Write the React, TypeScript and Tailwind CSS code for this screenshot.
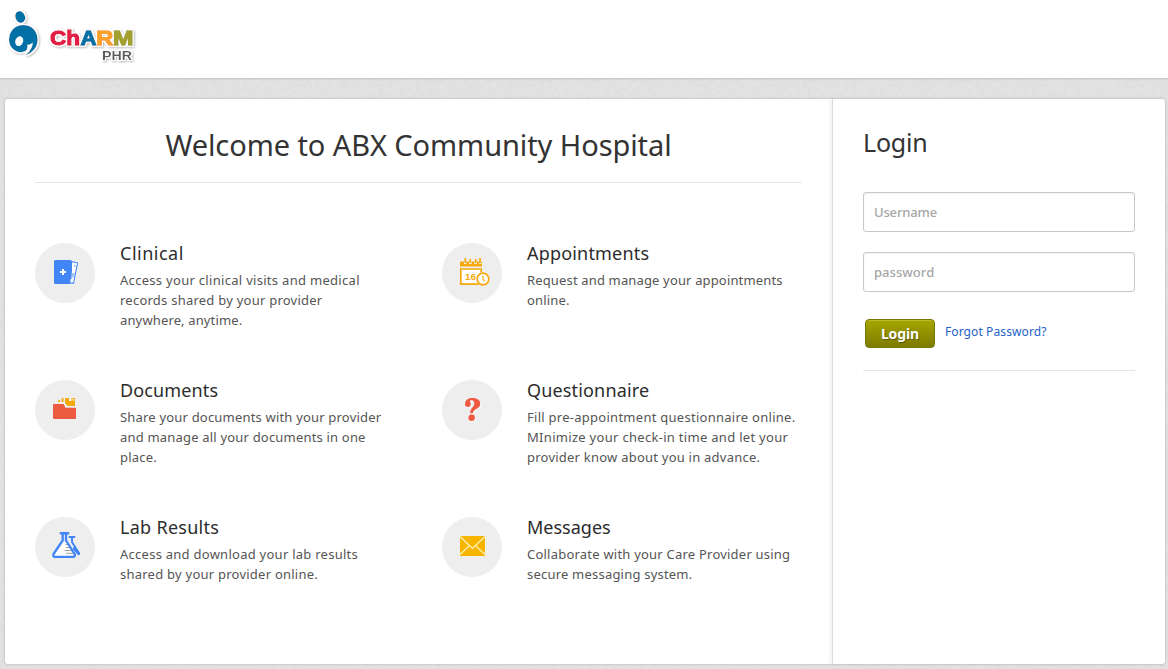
import type { ReactNode } from "react";

type Line = { text: string; tracking: string };
type Feature = { title: string; titleTracking: string; lines: Line[]; icon: ReactNode };

function ClinicalIcon() {
  return (
    <svg width="60" height="60" viewBox="0 0 60 60">
      <path d="M37 18 L43.3 19.3 L39 41 L31 40Z" fill="#fff" stroke="#fff" strokeWidth="1.5" />
      <path d="M37 18.6 L42.6 19.8 L38.6 40.4 L33 39.6" fill="#fff" stroke="#4285f4" strokeWidth="1.1" />
      <path d="M36 31h3.5M35.6 33h3.5M35 35h2.5M39 23h1.5" stroke="#4285f4" strokeWidth="1" />
      <path d="M20.5 17h15a1.5 1.5 0 0 1 1.5 1.5V28l-2 13H20.5a1.5 1.5 0 0 1-1.5-1.5v-21a1.5 1.5 0 0 1 1.5-1.5z" fill="#4285f4" />
      <path d="M28 26v6M25 29h6" stroke="#fff" strokeWidth="2" />
    </svg>
  );
}

function CalendarIcon() {
  return (
    <svg width="60" height="60" viewBox="0 0 60 60">
      <path d="M18 18.500h4v2.500h2.500v-2.500h2.500v2.500h2.700v-2.500h2.600v2.500h2.700v-2.500H37v2.500h2.300v-2.500H40v5H18z" fill="#f5a90a" />
      <path d="M23.300 15v5M28.300 16v4M33.700 16v4M38 15v5" stroke="#f5a90a" strokeWidth="1.700" />
      <path d="M18.800 26h20.400v15.200H18.800z" fill="#fff" stroke="#f5a90a" strokeWidth="1.700" />
      <text x="23" y="37" fontFamily="Liberation Sans, sans-serif" fontWeight="bold" fontSize="9" textLength="11" lengthAdjust="spacingAndGlyphs" fill="#f5a90a">16</text>
      <circle cx="41" cy="36" r="6.900" fill="#eee" />
      <circle cx="41" cy="36" r="5.800" fill="#fff" stroke="#f5a90a" strokeWidth="1.700" />
      <path d="M41 32.500V36l2 2.500" fill="none" stroke="#f5a90a" strokeWidth="1.200" />
    </svg>
  );
}

function FolderIcon() {
  return (
    <svg width="60" height="60" viewBox="0 0 60 60">
      <path d="M30 18h4v3h2.500V18H40v8h-7.500l-2.500-3z" fill="#f5a90a" />
      <path d="M37.500 18v2.500H40z" fill="#fff4cf" />
      <path d="M23 22v-1.500l2-.7V22zM26.500 22v-3.500l2-.5v4z" fill="#f5a90a" />
      <path d="M19 24h9.500l2 3.700H40a1 1 0 0 1 1 1V38a1 1 0 0 1-1 1H19a1 1 0 0 1-1-1V25a1 1 0 0 1 1-1z" fill="#ee5a40" />
    </svg>
  );
}

function QuestionIcon() {
  return (
    <svg width="60" height="60" viewBox="0 0 60 60">
      <path d="M23 24.500C23 19.500 26.500 18 30.500 18C35.500 18 38.300 20.200 38.300 23.800C38.300 28.800 31.500 28.800 30.800 33.200H28.300C27.700 28.300 32.300 27.300 32.300 23.500C32.300 21.300 31.200 20.300 29.500 20.300C28.600 20.300 28 20.700 28 21.300C28 22.100 28.800 22.600 28.800 24.200C28.800 26 27.600 27 26 27C24.200 27 23 26 23 24.500Z" fill="#fff" transform="translate(.9 .9)" />
      <circle cx="30.500" cy="38.600" r="3.200" fill="#fff" />
      <path d="M23 24.500C23 19.500 26.500 18 30.500 18C35.500 18 38.300 20.200 38.300 23.800C38.300 28.800 31.500 28.800 30.800 33.200H28.300C27.700 28.300 32.300 27.300 32.300 23.500C32.300 21.300 31.200 20.300 29.500 20.300C28.600 20.300 28 20.700 28 21.300C28 22.100 28.800 22.600 28.800 24.200C28.800 26 27.600 27 26 27C24.200 27 23 26 23 24.500Z" fill="#ee5a40" />
      <circle cx="29.700" cy="37.700" r="3.200" fill="#ee5a40" />
    </svg>
  );
}

function FlaskIcon() {
  return (
    <svg width="60" height="60" viewBox="0 0 60 60" fill="none" strokeLinejoin="round">
      <path d="M34.500 20h5M37 20v5L44 36.500" stroke="#4285f4" strokeWidth="2" strokeLinecap="round" />
      <path d="M39.500 31.500L43.500 36.500" stroke="#4285f4" strokeWidth="3.200" strokeLinecap="round" />
      <path d="M27.500 17v6L18.500 37.500 20 40H38.500L39.700 37.500L31.500 23.500V17z" fill="#eee" />
      <path d="M28 25L20 37.500 20.500 39H38.500L31 25z" fill="#fff" />
      <path d="M30.500 27.500h3M31 30.500h4.500M29.500 33.500h8M31 36.300h7" stroke="#888" strokeWidth=".8" />
      <path d="M27.700 17V23.500L18.500 37Q17.600 39.800 20 39.800H38.300Q40.600 39.700 39.600 37L31 23.500V17" stroke="#4285f4" strokeWidth="2.300" />
      <path d="M26 16.200h7" stroke="#4285f4" strokeWidth="2.600" strokeLinecap="round" />
    </svg>
  );
}

function EnvelopeIcon() {
  return (
    <svg width="60" height="60" viewBox="0 0 60 60">
      <path d="M18 19h25v20H18z" fill="#f7b500" />
      <path d="M18 19.500L30.500 31.500 43 19.500M18 37.500L27.500 28.600M43 37.500L33.500 28.600" fill="none" stroke="#fff3c4" strokeWidth="1.200" />
    </svg>
  );
}

const features: Feature[] = [
  {
    title: "Clinical", titleTracking: "tracking-[.5px]", icon: <ClinicalIcon />,
    lines: [
      { text: "Access your clinical visits and medical", tracking: "tracking-[.3px]" },
      { text: "records shared by your provider", tracking: "tracking-[.24px]" },
      { text: "anywhere, anytime.", tracking: "tracking-[.14px]" },
    ],
  },
  {
    title: "Appointments", titleTracking: "tracking-[.18px]", icon: <CalendarIcon />,
    lines: [
      { text: "Request and manage your appointments", tracking: "tracking-[.15px]" },
      { text: "online.", tracking: "tracking-[.16px]" },
    ],
  },
  {
    title: "Documents", titleTracking: "tracking-[.13px]", icon: <FolderIcon />,
    lines: [
      { text: "Share your documents with your provider", tracking: "tracking-[.19px]" },
      { text: "and manage all your documents in one", tracking: "tracking-[.19px]" },
      { text: "place.", tracking: "tracking-[.2px]" },
    ],
  },
  {
    title: "Questionnaire", titleTracking: "tracking-[.16px]", icon: <QuestionIcon />,
    lines: [
      { text: "Fill pre-appointment questionnaire online.", tracking: "tracking-[.27px]" },
      { text: "MInimize your check-in time and let your", tracking: "tracking-[.3px]" },
      { text: "provider know about you in advance.", tracking: "tracking-[.23px]" },
    ],
  },
  {
    title: "Lab Results", titleTracking: "tracking-[.28px]", icon: <FlaskIcon />,
    lines: [
      { text: "Access and download your lab results", tracking: "tracking-[.26px]" },
      { text: "shared by your provider online.", tracking: "tracking-[.24px]" },
    ],
  },
  {
    title: "Messages", titleTracking: "tracking-[0px]", icon: <EnvelopeIcon />,
    lines: [
      { text: "Collaborate with your Care Provider using", tracking: "tracking-[.22px]" },
      { text: "secure messaging system.", tracking: "tracking-[.21px]" },
    ],
  },
];

function Logo() {
  return (
    <svg width="142" height="70" viewBox="0 0 142 70" className="block" role="img" aria-label="ChARM PHR">
      <defs>
        <filter id="logoShadow" x="-10%" y="-10%" width="125%" height="130%">
          <feMorphology in="SourceAlpha" operator="dilate" radius="1" result="fat" />
          <feFlood floodColor="#fff" />
          <feComposite in2="fat" operator="in" result="halo" />
          <feGaussianBlur in="fat" stdDeviation="1" />
          <feOffset dx="1" dy="1" result="soft" />
          <feComponentTransfer in="soft" result="shade"><feFuncA type="linear" slope=".3" /></feComponentTransfer>
          <feMerge><feMergeNode in="shade" /><feMergeNode in="halo" /><feMergeNode in="SourceGraphic" /></feMerge>
        </filter>
      </defs>
      <g filter="url(#logoShadow)" style={{ colorInterpolationFilters: "sRGB" }}>
        <ellipse cx="20.200" cy="17" rx="4.900" ry="6" transform="rotate(-22 20.200 17)" fill="#0070a5" />
        <path d="M23.300 25C31.500 25 37.700 31 37.700 39.500C37.700 47.500 32.500 53 25.600 55.200C29.600 51.600 32.500 47.500 32.800 42.500C31.500 46.400 28.800 50.200 22.800 52C15.500 53.300 9 47.500 9 39.800C9 31 15 25 23.300 25Z" fill="#0070a5" />
        <ellipse cx="19.200" cy="41.200" rx="3.900" ry="5" transform="rotate(20 19.200 41.200)" fill="#fff" />
        <path d="M27 44.800Q30.500 45.300 32.700 42.200Q32 49.200 24.500 52.500Q28.500 48.500 27 44.800Z" fill="#fff" />
        <g fontFamily="Liberation Sans, sans-serif" fontWeight="bold">
          <g fontSize="20.500" strokeWidth="1.300" strokeLinejoin="miter">
            <text x="50" y="45.300" fill="#e21f45" stroke="#e21f45" textLength="30" lengthAdjust="spacingAndGlyphs">Ch</text>
            <text x="80.500" y="45.300" fill="#0070a5" stroke="#0070a5" textLength="16" lengthAdjust="spacingAndGlyphs">A</text>
            <text x="96.300" y="45.300" fill="#f9a02b" stroke="#f9a02b" textLength="17" lengthAdjust="spacingAndGlyphs">R</text>
            <text x="113" y="45.300" fill="#a3a02e" stroke="#a3a02e" textLength="20.500" lengthAdjust="spacingAndGlyphs">M</text>
          </g>
          <text x="102" y="59.800" fontSize="13.500" fill="#59595b" textLength="30" lengthAdjust="spacingAndGlyphs">PHR</text>
        </g>
      </g>
    </svg>
  );
}

function PaperTexture() {
  return (
    <svg className="pointer-events-none absolute inset-0 size-full" aria-hidden="true">
      <filter id="paper">
        <feTurbulence type="fractalNoise" baseFrequency=".25" numOctaves="2" seed="4" />
        <feColorMatrix values="0 0 0 0 1  0 0 0 0 1  0 0 0 0 1  .8 0 0 0 -.25" />
      </filter>
      <rect width="100%" height="100%" filter="url(#paper)" opacity=".4" />
    </svg>
  );
}

function FeatureItem({ feature }: { feature: Feature }) {
  return (
    <article className="flex h-[137px] gap-[25px]">
      <div className="mt-px size-[60px] shrink-0 overflow-hidden rounded-full bg-[#eee]">{feature.icon}</div>
      <div className="whitespace-nowrap">
        <h2 className={`h-7 text-[18px] leading-[22px] text-[#2c2c2c] ${feature.titleTracking}`}>{feature.title}</h2>
        <p className="text-[13px] leading-5 text-[#555]">
          {feature.lines.map((line) => (
            <span key={line.text} className={`block ${line.tracking}`}>{line.text}</span>
          ))}
        </p>
      </div>
    </article>
  );
}

export default function App() {
  return (
    <div className="relative flex h-[669px] w-full flex-col overflow-hidden bg-[#dfdfdf] font-['Noto_Sans','Open_Sans',sans-serif]">
      <PaperTexture />
      <header className="relative h-[78px] shrink-0 bg-white shadow-[0_1px_2px_rgba(0,0,0,.15)]">
        <Logo />
      </header>
      <main className="relative mt-[21px] mr-[3px] ml-[5px] flex h-[565px] rounded-[3px] bg-white shadow-[0_0_2px_1px_rgba(0,0,0,.1)]">
        <section className="w-[827px] px-[30px]">
          <h1 className="flex h-[84px] items-center justify-center border-b border-[#e6e6e6] pt-2 text-[29px] tracking-[-.08px] whitespace-nowrap text-[#333]">
            Welcome to ABX Community Hospital
          </h1>
          <div className="grid grid-cols-[407px_360px] pt-[59px]">
            {features.map((feature) => <FeatureItem key={feature.title} feature={feature} />)}
          </div>
        </section>
        <aside className="flex-1 border-l border-[#dcdcdc] px-[30px] shadow-[-2px_0_3px_rgba(0,0,0,.05)]">
          <h2 className="pt-[26px] text-[25px] leading-[34px] tracking-[-.2px] text-[#333]">Login</h2>
          <form className="mt-[33px] w-[272px] border-b border-[#e6e6e6] pb-[22px]" onSubmit={(e) => e.preventDefault()}>
            <input
              aria-label="Username"
              placeholder="Username"
              className="block h-10 w-full rounded-[3px] border border-[#c8c8c8] px-[10px] text-[13px] tracking-[-.15px] shadow-[inset_0_1px_2px_rgba(0,0,0,.06)] placeholder:font-medium placeholder:text-[#a6a6a6]"
            />
            <input
              type="password"
              aria-label="Password"
              placeholder="password"
              className="mt-5 block h-10 w-full rounded-[3px] border border-[#c8c8c8] px-[10px] text-[13px] tracking-[.05px] shadow-[inset_0_1px_2px_rgba(0,0,0,.06)] placeholder:font-medium placeholder:text-[#a6a6a6]"
            />
            <div className="mt-[27px] ml-[2px] flex">
              <button className="h-[29px] w-[70px] rounded-[4px] border border-[#777600] bg-linear-to-b from-[#a5a500] to-[#7f7b00] text-[14px] leading-[27px] font-bold tracking-[-.1px] text-white shadow-[inset_0_1px_0_#b8b82a] text-shadow-[1px_1px_1px_rgba(0,0,0,.35)]">
                Login
              </button>
              <a href="#forgot" className="ml-[10px] text-[12px] leading-[25px] tracking-[.1px] text-[#1f62c9]">Forgot Password?</a>
            </div>
          </form>
        </aside>
      </main>
    </div>
  );
}
